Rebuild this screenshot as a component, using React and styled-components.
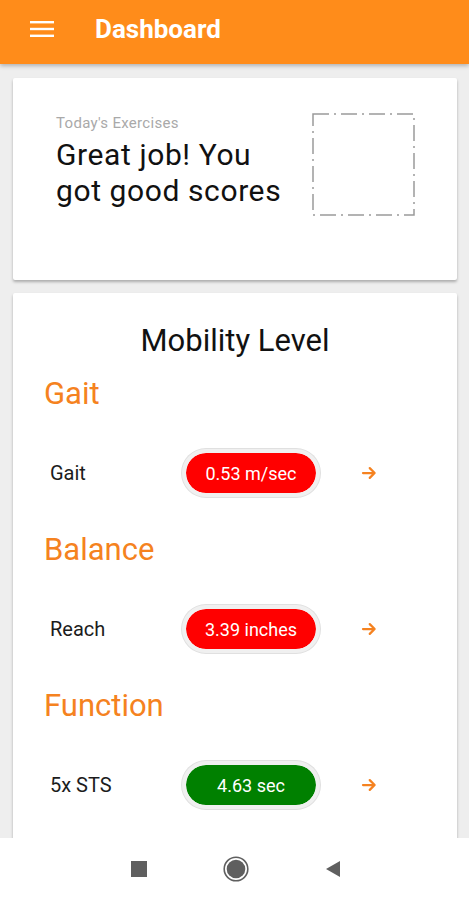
import React from "react";
import styled, { createGlobalStyle } from "styled-components";

const GlobalStyle = createGlobalStyle`
    html, body {
        margin: 0;
        padding: 0;
        height: 100%;
    }
    body {
        font-family: Roboto, "Noto Sans", sans-serif;
        background: #eeeeee;
    }
    #root {
        height: 100%;
    }
`

const Screen = styled.div`
    display: flex;
    flex-direction: column;
    height: 900px;
    overflow: hidden;
    background: #eeeeee;
`

const Header = styled.header`
    display: flex;
    align-items: center;
    height: 64px;
    box-sizing: border-box;
    padding: 0 0 7px 30px;
    flex-shrink: 0;
    background: #ff8c1a;
    box-shadow: 0 2px 4px rgba(0, 0, 0, 0.25);
    position: relative;
    z-index: 1;

    h1 {
        margin: 0 0 0 41px;
        color: #ffffff;
        font-size: 26px;
        font-weight: 700;
    }
`

const Content = styled.main`
    flex: 1;
    overflow: hidden;
    display: flex;
    flex-direction: column;
    gap: 13px;
    padding: 14px 12px 0 13px;
`

const Card = styled.section`
    background: #ffffff;
    box-shadow: 0 2px 3px rgba(0, 0, 0, 0.28);
    border-radius: 2px;
    flex-shrink: 0;
`

const SummaryCard = styled(Card)`
    height: 202px;
    box-sizing: border-box;
    display: flex;
    justify-content: space-between;
    padding: 35px 42px 0 43px;

    small {
        display: block;
        color: #a9a9a9;
        font-size: 15px;
        letter-spacing: 0.02em;
        line-height: 16px;
        margin-top: 2px;
    }

    h2 {
        margin: 6px 0 0;
        font-size: 30px;
        font-weight: 400;
        letter-spacing: 0.02em;
        line-height: 36px;
        color: #111111;
    }
`

const Placeholder = styled.svg`
    flex-shrink: 0;
    width: 103px;
    height: 103px;
`

const MobilityCard = styled(Card)`
    flex: 1;
    padding: 30px 0 0 0;

    h2 {
        margin: 0 0 17px;
        text-align: center;
        font-size: 31px;
        font-weight: 400;
        line-height: 36px;
        color: #111111;
    }
`

const Group = styled.div`
    margin-bottom: 35px;

    h3 {
        margin: 0 0 37px 31px;
        color: #f58220;
        font-size: 31px;
        font-weight: 400;
        line-height: 36px;
    }
`

const Row = styled.div`
    display: flex;
    align-items: center;
    height: 48px;
    padding-left: 37px;

    span {
        width: 132px;
        font-size: 20px;
        color: #1c1c1c;
    }
`

const Pill = styled.div`
    width: 138px;
    height: 48px;
    box-sizing: border-box;
    border: 4px solid #f0f0f0;
    border-radius: 24px;
    background: ${p => p.$good ? "#008000" : "#ff0000"};
    background-clip: padding-box;
    display: flex;
    align-items: center;
    justify-content: center;
    color: #ffffff;
    font-size: 18px;
    font-weight: 400;
    box-shadow: 0 0 0 1px #e0e0e0;
`

const Arrow = styled.svg`
    margin-left: 40px;
    width: 18px;
    height: 18px;
`

const NavBar = styled.nav`
    height: 62px;
    flex-shrink: 0;
    background: #ffffff;
    display: flex;
    align-items: center;
    justify-content: center;
    gap: 71px;
    padding-left: 2px;

    svg {
        width: 26px;
        height: 26px;
    }
`

const groups = [
    { title: "Gait", label: "Gait", value: "0.53 m/sec", good: false },
    { title: "Balance", label: "Reach", value: "3.39 inches", good: false },
    { title: "Function", label: "5x STS", value: "4.63 sec", good: true },
]

const App = () => (
    <>
        <GlobalStyle />
        <Screen>
            <Header>
                <svg width="24" height="18" viewBox="0 0 24 18">
                    <rect x="0" y="1" width="24" height="2.4" fill="#fff" />
                    <rect x="0" y="7.8" width="24" height="2.4" fill="#fff" />
                    <rect x="0" y="14.6" width="24" height="2.4" fill="#fff" />
                </svg>
                <h1>Dashboard</h1>
            </Header>
            <Content>
                <SummaryCard>
                    <div>
                        <small>Today's Exercises</small>
                        <h2>Great job! You<br />got good scores</h2>
                    </div>
                    <Placeholder viewBox="0 0 103 103">
                        <rect
                            x="1" y="1" width="101" height="101"
                            fill="none" stroke="#9a9a9a" strokeWidth="1.5"
                            strokeDasharray="16 5 2 5"
                        />
                    </Placeholder>
                </SummaryCard>
                <MobilityCard>
                    <h2>Mobility Level</h2>
                    {groups.map(g => (
                        <Group key={g.title}>
                            <h3>{g.title}</h3>
                            <Row>
                                <span>{g.label}</span>
                                <Pill $good={g.good}>{g.value}</Pill>
                                <Arrow viewBox="0 0 24 24">
                                    <path
                                        d="M4 12h15M13 5.5l6.5 6.5-6.5 6.5"
                                        fill="none" stroke="#f58220" strokeWidth="3"
                                        strokeLinecap="round" strokeLinejoin="round"
                                    />
                                </Arrow>
                            </Row>
                        </Group>
                    ))}
                </MobilityCard>
            </Content>
            <NavBar>
                <svg viewBox="0 0 26 26">
                    <rect x="5" y="5" width="16" height="16" fill="#5f5f5f" />
                </svg>
                <svg viewBox="0 0 26 26">
                    <circle cx="13" cy="13" r="11.8" fill="none" stroke="#5f5f5f" strokeWidth="1.6" />
                    <circle cx="13" cy="13" r="9.3" fill="#5f5f5f" />
                </svg>
                <svg viewBox="0 0 26 26">
                    <path d="M20 5v16L6 13z" fill="#5f5f5f" />
                </svg>
            </NavBar>
        </Screen>
    </>
)

export default App;
